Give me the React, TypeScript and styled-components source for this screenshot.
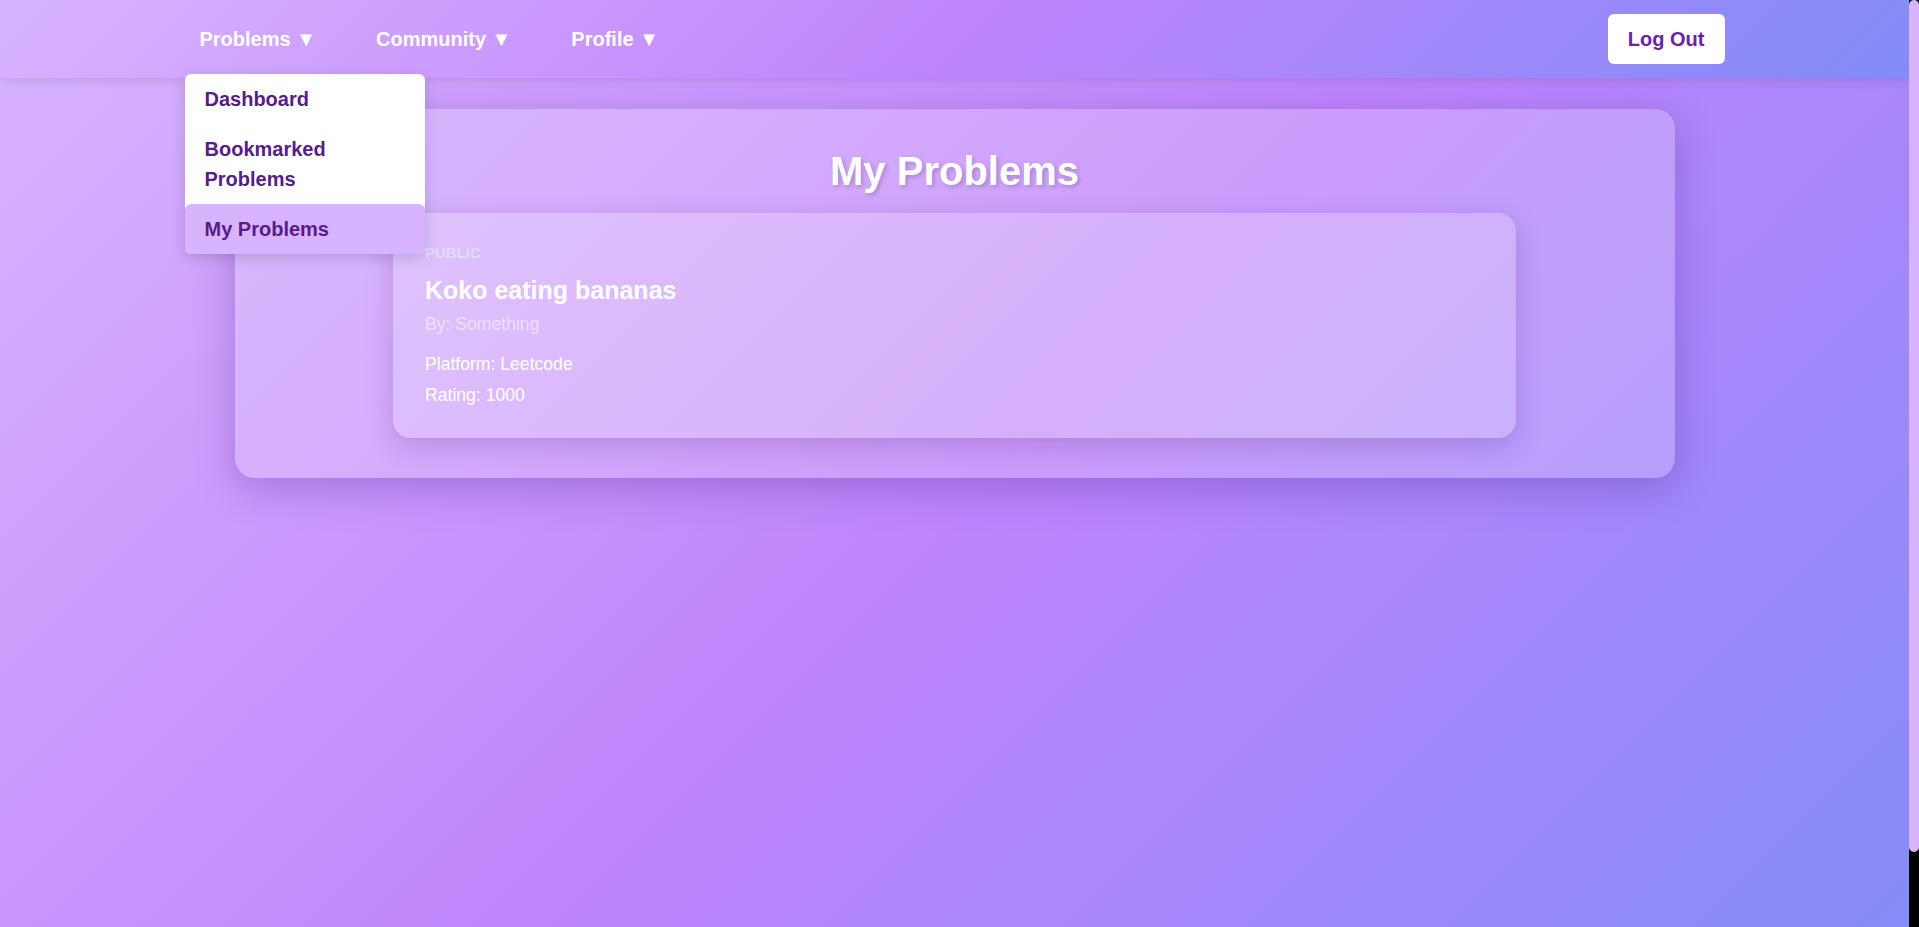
import React from "react";
import styled, { createGlobalStyle } from "styled-components";

const GlobalStyle = createGlobalStyle`
  html, body { margin: 0; padding: 0; }
  html { scrollbar-width: none; }
  html::-webkit-scrollbar { display: none; }
  body {
    font-family: "Liberation Sans", Arial, sans-serif;
    background: linear-gradient(135deg, #d8b4fe 0%, #c084fc 50%, #818cf8 100%);
    min-height: 100vh;
    padding-right: 10px;
  }
`;

/* Page scrollbar drawn as an overlay on the right edge */
const ScrollRail = styled.div`
  position: fixed;
  top: 0;
  right: 0;
  bottom: 0;
  width: 10px;
  background: #000;
  z-index: 100;
`;

const ScrollThumb = styled.div`
  height: 852px;
  background: #d8b4fe;
  border-radius: 5px;
`;

const NavBar = styled.nav`
  position: relative;
  z-index: 10;
  background: linear-gradient(135deg, #d8b4fe 0%, #c084fc 50%, #818cf8 100%);
  box-shadow: 0 2px 10px rgba(0, 0, 0, 0.12);
`;

const NavInner = styled.div`
  max-width: 1540px;
  height: 78px;
  margin: 0 auto;
  display: flex;
  align-items: center;
  justify-content: space-between;
`;

const NavLinks = styled.div`
  display: flex;
  align-items: center;
  gap: 30px;
`;

const NavItem = styled.div`
  position: relative;
`;

const NavButton = styled.button`
  background: none;
  border: none;
  color: #ffffff;
  font: bold 20px/1.5 "Liberation Sans", Arial, sans-serif;
  padding: 10px 15px;
  cursor: pointer;
`;

const Dropdown = styled.div`
  position: absolute;
  top: calc(100% + 10px);
  left: 0;
  width: 240px;
  background: #ffffff;
  border-radius: 6px;
  box-shadow: 0 4px 14px rgba(0, 0, 0, 0.15);
  display: flex;
  flex-direction: column;
`;

const DropdownItem = styled.a<{ $active?: boolean }>`
  display: block;
  padding: 10px 20px;
  font: bold 20px/1.5 "Liberation Sans", Arial, sans-serif;
  color: #581c87;
  text-decoration: none;
  border-radius: 6px;
  background: ${(p) => (p.$active ? "#d8b4fe" : "transparent")};
`;

const LogoutButton = styled.button`
  background: #ffffff;
  color: #6b21a8;
  border: none;
  border-radius: 6px;
  padding: 10px 20px;
  font: bold 20px/1.5 "Liberation Sans", Arial, sans-serif;
  cursor: pointer;
`;

const Main = styled.main`
  min-height: 100vh;
  box-sizing: border-box;
  padding: 31px 20px 40px;
`;

const Panel = styled.section`
  max-width: 1440px;
  margin: 0 auto;
  box-sizing: border-box;
  padding: 40px;
  border-radius: 20px;
  background: rgba(255, 255, 255, 0.2);
  box-shadow: 0 10px 40px rgba(60, 30, 140, 0.3);
`;

const Title = styled.h1`
  margin: 0 0 19px;
  font-size: 40px;
  line-height: normal;
  font-weight: bold;
  text-align: center;
  color: #ffffff;
  text-shadow: 2px 2px 4px rgba(0, 0, 0, 0.2);
`;

const ProblemList = styled.div`
  display: flex;
  flex-direction: column;
  align-items: center;
  gap: 20px;
`;

const ProblemCard = styled.article`
  width: 100%;
  max-width: 1123px;
  box-sizing: border-box;
  padding: 31px 32px 32px;
  border-radius: 18px;
  background: rgba(255, 255, 255, 0.2);
  box-shadow: 0 8px 28px rgba(60, 20, 120, 0.2);
`;

const Visibility = styled.div`
  margin-bottom: 15px;
  font-size: 15px;
  font-weight: bold;
  line-height: normal;
  text-transform: uppercase;
  color: rgba(224, 231, 255, 0.75);
`;

const ProblemTitle = styled.h3`
  margin: 0 0 9px;
  font-size: 25px;
  font-weight: bold;
  line-height: normal;
  color: #ffffff;
`;

const Author = styled.p`
  margin: 0 0 19px;
  font-size: 17.6px;
  line-height: normal;
  color: rgba(255, 255, 255, 0.55);
`;

const Meta = styled.p`
  margin: 0 0 10px;
  font-size: 17.6px;
  line-height: normal;
  color: #ffffff;
  &:last-child { margin-bottom: 0; }
`;

export default function App() {
  return (
    <>
      <GlobalStyle />
      <ScrollRail>
        <ScrollThumb />
      </ScrollRail>
      <NavBar>
        <NavInner>
          <NavLinks>
            <NavItem>
              <NavButton>Problems ▼</NavButton>
              <Dropdown>
                <DropdownItem href="#">Dashboard</DropdownItem>
                <DropdownItem href="#">Bookmarked Problems</DropdownItem>
                <DropdownItem href="#" $active>
                  My Problems
                </DropdownItem>
              </Dropdown>
            </NavItem>
            <NavItem>
              <NavButton>Community ▼</NavButton>
            </NavItem>
            <NavItem>
              <NavButton>Profile ▼</NavButton>
            </NavItem>
          </NavLinks>
          <LogoutButton>Log Out</LogoutButton>
        </NavInner>
      </NavBar>
      <Main>
        <Panel>
          <Title>My Problems</Title>
          <ProblemList>
            <ProblemCard>
              <Visibility>Public</Visibility>
              <ProblemTitle>Koko eating bananas</ProblemTitle>
              <Author>By: Something</Author>
              <Meta>Platform: Leetcode</Meta>
              <Meta>Rating: 1000</Meta>
            </ProblemCard>
          </ProblemList>
        </Panel>
      </Main>
    </>
  );
}
